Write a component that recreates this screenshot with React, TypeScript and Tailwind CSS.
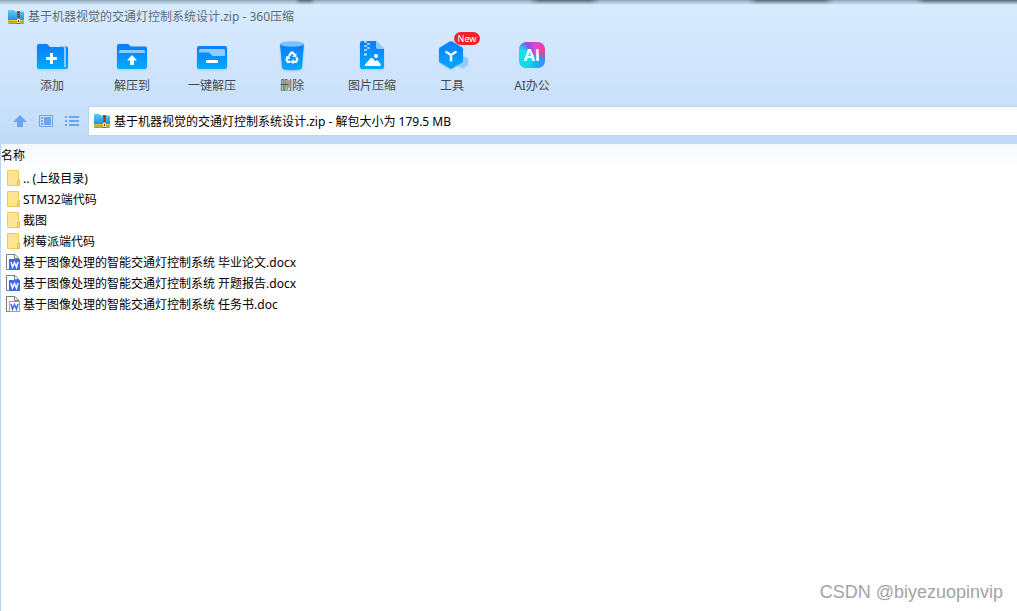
import type { ReactNode } from "react";

const ARCHIVE_NAME = "基于机器视觉的交通灯控制系统设计.zip";

const ArchiveIcon = () => (
  <svg width="16" height="16" viewBox="0 0 16 16" className="shrink-0" aria-hidden="true">
    <defs>
      <linearGradient id="archiveBlue" x1="0" y1="0" x2="0" y2="1">
        <stop offset="0" stopColor="#5ccbfa" />
        <stop offset="1" stopColor="#1f93e4" />
      </linearGradient>
    </defs>
    <path d="M0 2a1 1 0 0 1 1-1h4.500l1.500 1.500h8a1 1 0 0 1 1 1V11H0z" fill="url(#archiveBlue)" />
    <path d="M0 11h16v1H0z" fill="#f7c928" />
    <path d="M0 12h16v1.500H0z" fill="#f08a1c" />
    <path d="M0 13.500h16V14a1 1 0 0 1-1 1H1a1 1 0 0 1-1-1z" fill="#6cb83a" />
    <path d="M9 2h3v13H9z" fill="#a8561c" />
    <path d="M10.500 3v7" stroke="#6b3510" strokeWidth="1" strokeDasharray="1 1" />
    <rect x="9" y="9.500" width="3" height="4.500" rx="1" fill="#ffe9b0" />
    <rect x="10" y="11" width="1" height="2" fill="#6b3510" />
  </svg>
);

const ToolSvg = ({ children }: { children: ReactNode }) => (
  <svg
    width="32"
    height="32"
    viewBox="0 0 32 32"
    className="overflow-visible drop-shadow-[0_1px_1px_rgba(60,140,230,0.25)]"
    aria-hidden="true"
  >
    {children}
  </svg>
);

const AddIcon = () => (
  <ToolSvg>
    <path d="M26 6.500h4a2 2 0 0 1 2 2V27a2 2 0 0 1-2 2h-4z" fill="url(#toolBlue)" />
    <path d="M24 6h4.500a1.500 1.500 0 0 1 1.500 1.500V27H24z" fill="#8ecbff" />
    <path
      d="M1 6a2 2 0 0 1 2-2h8l3 3h12.500a1.500 1.500 0 0 1 1.500 1.500V29H3a2 2 0 0 1-2-2z"
      fill="url(#toolBlue)"
    />
    <path d="M15.500 13v11M10 18.500h11" stroke="#fff" strokeWidth="3" />
  </ToolSvg>
);

const ExtractIcon = () => (
  <ToolSvg>
    <path
      d="M1 6a2 2 0 0 1 2-2h9l3 2.500h14a2 2 0 0 1 2 2V27a2 2 0 0 1-2 2H3a2 2 0 0 1-2-2z"
      fill="url(#toolBlue)"
    />
    <path d="M3 13v-1.500A1.500 1.500 0 0 1 4.500 10h23a1.500 1.500 0 0 1 1.500 1.500V13z" fill="#8ecbff" />
    <path d="M16 15l5 5.500h-3V25h-4v-4.500h-3z" fill="#fff" />
  </ToolSvg>
);

const OneKeyIcon = () => (
  <ToolSvg>
    <rect x="1" y="6" width="30" height="23" rx="2" fill="url(#toolBlue)" />
    <path
      d="M3 10.500A1.500 1.500 0 0 1 4.500 9h23a1.500 1.500 0 0 1 1.500 1.500V16H16.500L13 12.500H3z"
      fill="#8ecbff"
    />
    <rect x="10" y="20" width="12" height="3" rx="1" fill="#fff" />
  </ToolSvg>
);

const DeleteIcon = () => (
  <ToolSvg>
    <path
      d="M4 4h24l-2 23c-.2 1.800-1.500 2.500-3.500 2.800-4 .5-9 .5-13 0C7.500 29.500 6.200 28.800 6 27z"
      fill="url(#toolBlue)"
    />
    <ellipse cx="16" cy="4" rx="12" ry="2.800" fill="#7cc2ff" />
    <g fill="none" stroke="#fff" strokeWidth="2.200">
      <path d="M13 16l2.300-3.300h1.600l1.700 2.600" />
      <path d="M20.300 17.300l1 2.200-1.300 2.300h-3" />
      <path d="M14.500 21.800h-2.800l-1.200-2 1.400-2.700" />
    </g>
    <path d="M20.400 13v4h-4zM17.500 19v5.400L14.600 21.800zM9.300 16.800l4-1 .6 4z" fill="#fff" />
  </ToolSvg>
);

const ImageZipIcon = () => (
  <ToolSvg>
    <path d="M4 3a2 2 0 0 1 2-2h14l8 8v18a2 2 0 0 1-2 2H6a2 2 0 0 1-2-2z" fill="url(#toolBlue)" />
    <path d="M20 1l8 8h-6a2 2 0 0 1-2-2z" fill="#8ecbff" />
    <path
      d="M8 1h3v2H8zM11 3h3v2h-3zM8 5h3v2H8zM11 7h3v2h-3zM8 9h3v2H8z"
      fill="#8ecbff"
    />
    <rect x="8" y="13" width="3" height="3" fill="#8ecbff" />
    <circle cx="20" cy="16" r="2" fill="#fff" />
    <path d="M9 26v-1.500l5.500-6.200q1-1 2 0l2.700 3 1.300-.8q.8-.4 1.500.3l2.500 3.200V26z" fill="#fff" />
  </ToolSvg>
);

const ToolsIcon = () => (
  <ToolSvg>
    <path d="M25 15l7 3.500v6L26.500 28 21 25z" fill="#8ecbff" />
    <path
      d="M13.800 1.600q1.200-.7 2.400 0l9.600 5.600q1.200.7 1.200 2v11.600q0 1.300-1.200 2l-9.600 5.600q-1.200.7-2.400 0L4.200 22.800Q3 22.100 3 20.800V9.200q0-1.300 1.200-2z"
      fill="url(#toolBlue)"
    />
    <path d="M9.500 11.500L15 15l5.500-3.500M15 15v6.500" fill="none" stroke="#e8f6ff" strokeWidth="2.600" />
  </ToolSvg>
);

const AiIcon = () => (
  <span className="flex h-8 items-start justify-center pt-0.5">
    <span className="flex size-[26px] items-center justify-center rounded-[7px] bg-[conic-gradient(from_0deg_at_60%_50%,#e044e0_0deg,#f0408c_65deg,#3c8cf8_115deg,#1ea8ff_160deg,#12d8ec_220deg,#16e4ee_290deg,#8a50e8_325deg,#e044e0_360deg)] font-['Open_Sans',sans-serif] text-base font-bold text-white">
      AI
    </span>
  </span>
);

const tools = [
  { label: "添加", icon: <AddIcon /> },
  { label: "解压到", icon: <ExtractIcon /> },
  { label: "一键解压", icon: <OneKeyIcon /> },
  { label: "删除", icon: <DeleteIcon /> },
  { label: "图片压缩", icon: <ImageZipIcon /> },
  { label: "工具", icon: <ToolsIcon />, badge: "New" },
  { label: "AI办公", icon: <AiIcon /> },
];

const FolderIcon = () => (
  <svg width="16" height="18" viewBox="0 0 16 18" className="shrink-0" aria-hidden="true">
    <path d="M1.500.500h11v15h-11z" fill="#ffe494" stroke="#efcb5c" />
    <path d="M11.500 10.500l2-1v6h-2z" fill="#ffdf80" stroke="#e9c04a" />
  </svg>
);

const WordIcon = ({ legacy }: { legacy?: boolean }) => (
  <svg width="16" height="18" viewBox="0 0 16 18" className="shrink-0" aria-hidden="true">
    <path d="M.500.500h8.500l3.500 3.500v11.500H.500z" fill="#fff" stroke="#7b7b7b" />
    <path d="M8.500.500v4h4" fill="none" stroke="#7b7b7b" />
    <rect
      x="3.500"
      y="5.500"
      width="10"
      height="10"
      fill={legacy ? "#fff" : "#3d68f5"}
      stroke={legacy ? "#7da0f8" : "#3d68f5"}
    />
    <path
      d="M5 8l1.500 5 2-4.500 2 4.500L12 8"
      fill="none"
      stroke={legacy ? "#3d68f5" : "#fff"}
      strokeWidth="1.500"
    />
  </svg>
);

const files = [
  { name: ".. (上级目录)", icon: <FolderIcon /> },
  { name: "STM32端代码", icon: <FolderIcon /> },
  { name: "截图", icon: <FolderIcon /> },
  { name: "树莓派端代码", icon: <FolderIcon /> },
  { name: "基于图像处理的智能交通灯控制系统 毕业论文.docx", icon: <WordIcon /> },
  { name: "基于图像处理的智能交通灯控制系统 开题报告.docx", icon: <WordIcon /> },
  { name: "基于图像处理的智能交通灯控制系统 任务书.doc", icon: <WordIcon legacy /> },
];

const Toolbar = () => (
  <div className="flex px-3 pt-[7px] pb-2.5">
    {/* Gradient shared by all the toolbar icons */}
    <svg className="absolute size-0" aria-hidden="true">
      <defs>
        <linearGradient id="toolBlue" x1="0" y1="0" x2="0" y2="1">
          <stop offset="0" stopColor="#0a7cff" />
          <stop offset="1" stopColor="#02aaff" />
        </linearGradient>
      </defs>
    </svg>
    {tools.map((tool) => (
      <button
        key={tool.label}
        type="button"
        className="relative flex w-20 flex-col items-center gap-1 leading-5 text-[#444a52]"
      >
        {tool.icon}
        <span>{tool.label}</span>
        {tool.badge && (
          <span className="absolute -top-2 left-[42px] flex h-[13px] w-[26px] items-center justify-center rounded-full bg-[#f5222d] text-[9px] text-white">
            {tool.badge}
          </span>
        )}
      </button>
    ))}
  </div>
);

const AddressBar = () => (
  <div className="flex items-center gap-2 pb-2 pl-3">
    <div className="flex gap-2.5 text-[#6ba4ee]">
      <button type="button" aria-label="向上">
        <svg width="16" height="16" viewBox="0 0 16 16" fill="currentColor">
          <path d="M8 2l7 7h-4v5H5V9H1z" />
        </svg>
      </button>
      <button type="button" aria-label="预览">
        <svg width="16" height="16" viewBox="0 0 16 16" fill="currentColor">
          <path d="M1.500 2.500h13v11h-13z" fill="none" stroke="currentColor" />
          <path d="M3 4h2v2H3zM3 7h2v2H3zM3 10h2v2H3zM6 4h7v8H6z" />
        </svg>
      </button>
      <button type="button" aria-label="列表">
        <svg width="16" height="16" viewBox="0 0 16 16" fill="currentColor">
          <path d="M1 3h2v2H1zM1 7h2v2H1zM1 11h2v2H1zM5 3h10v2H5zM5 7h10v2H5zM5 11h10v2H5z" />
        </svg>
      </button>
    </div>
    <div className="flex h-[30px] min-w-0 flex-1 items-center gap-1 border border-r-0 border-[#b9d5f3] bg-white pl-[5px]">
      <ArchiveIcon />
      <input
        type="text"
        aria-label="路径"
        defaultValue={`${ARCHIVE_NAME} - 解包大小为 179.5 MB`}
        className="h-full min-w-0 flex-1 bg-transparent text-black outline-none"
      />
    </div>
  </div>
);

const App = () => {
  return (
    <div className="flex min-h-screen flex-col border-l border-[#b5d3f5] bg-white font-['Noto_Sans','Noto_Sans_CJK_SC',sans-serif] text-xs text-black">
      <header className="relative -ml-px bg-linear-to-b from-[#d8ecff] via-[#cfe4fc] to-[#c1dcf8]">
        {/* Shadow cast by the window behind */}
        <div className="absolute inset-x-0 top-0 h-[5px] bg-[linear-gradient(90deg,#8fa3b7_29%,#566472_29.5%,#566472_30.5%,#8fa3b7_31%,#8fa3b7_52%,#566472_53%,#566472_58%,#8fa3b7_59%,#8fa3b7_73.5%,#566472_74.5%,#566472_81%,#8fa3b7_82%,#8fa3b7_90%,#566472_91%)] mask-b-from-0%" />
        <div className="flex h-[33px] items-center gap-1 pl-2">
          <ArchiveIcon />
          <h1 className="text-[#5d6b7a]">{ARCHIVE_NAME} - 360压缩</h1>
        </div>
        <Toolbar />
        <AddressBar />
      </header>

      <main className="flex-1">
        <table className="w-full border-collapse text-left">
          <thead>
            <tr className="h-6 bg-linear-to-b from-[#f3f9ff] to-white">
              <th className="p-0 font-normal">名称</th>
            </tr>
          </thead>
          <tbody>
            {files.map((file) => (
              <tr key={file.name} className="h-[21px]">
                <td className="p-0 pl-[5px]">
                  <div className="flex items-center gap-px">
                    {file.icon}
                    <span>{file.name}</span>
                  </div>
                </td>
              </tr>
            ))}
          </tbody>
        </table>
      </main>

      <footer className="px-3.5 pb-[5px] text-right font-['Liberation_Sans',sans-serif] text-lg text-[#a3a3a3]">
        CSDN @biyezuopinvip
      </footer>
    </div>
  );
};

export default App;
